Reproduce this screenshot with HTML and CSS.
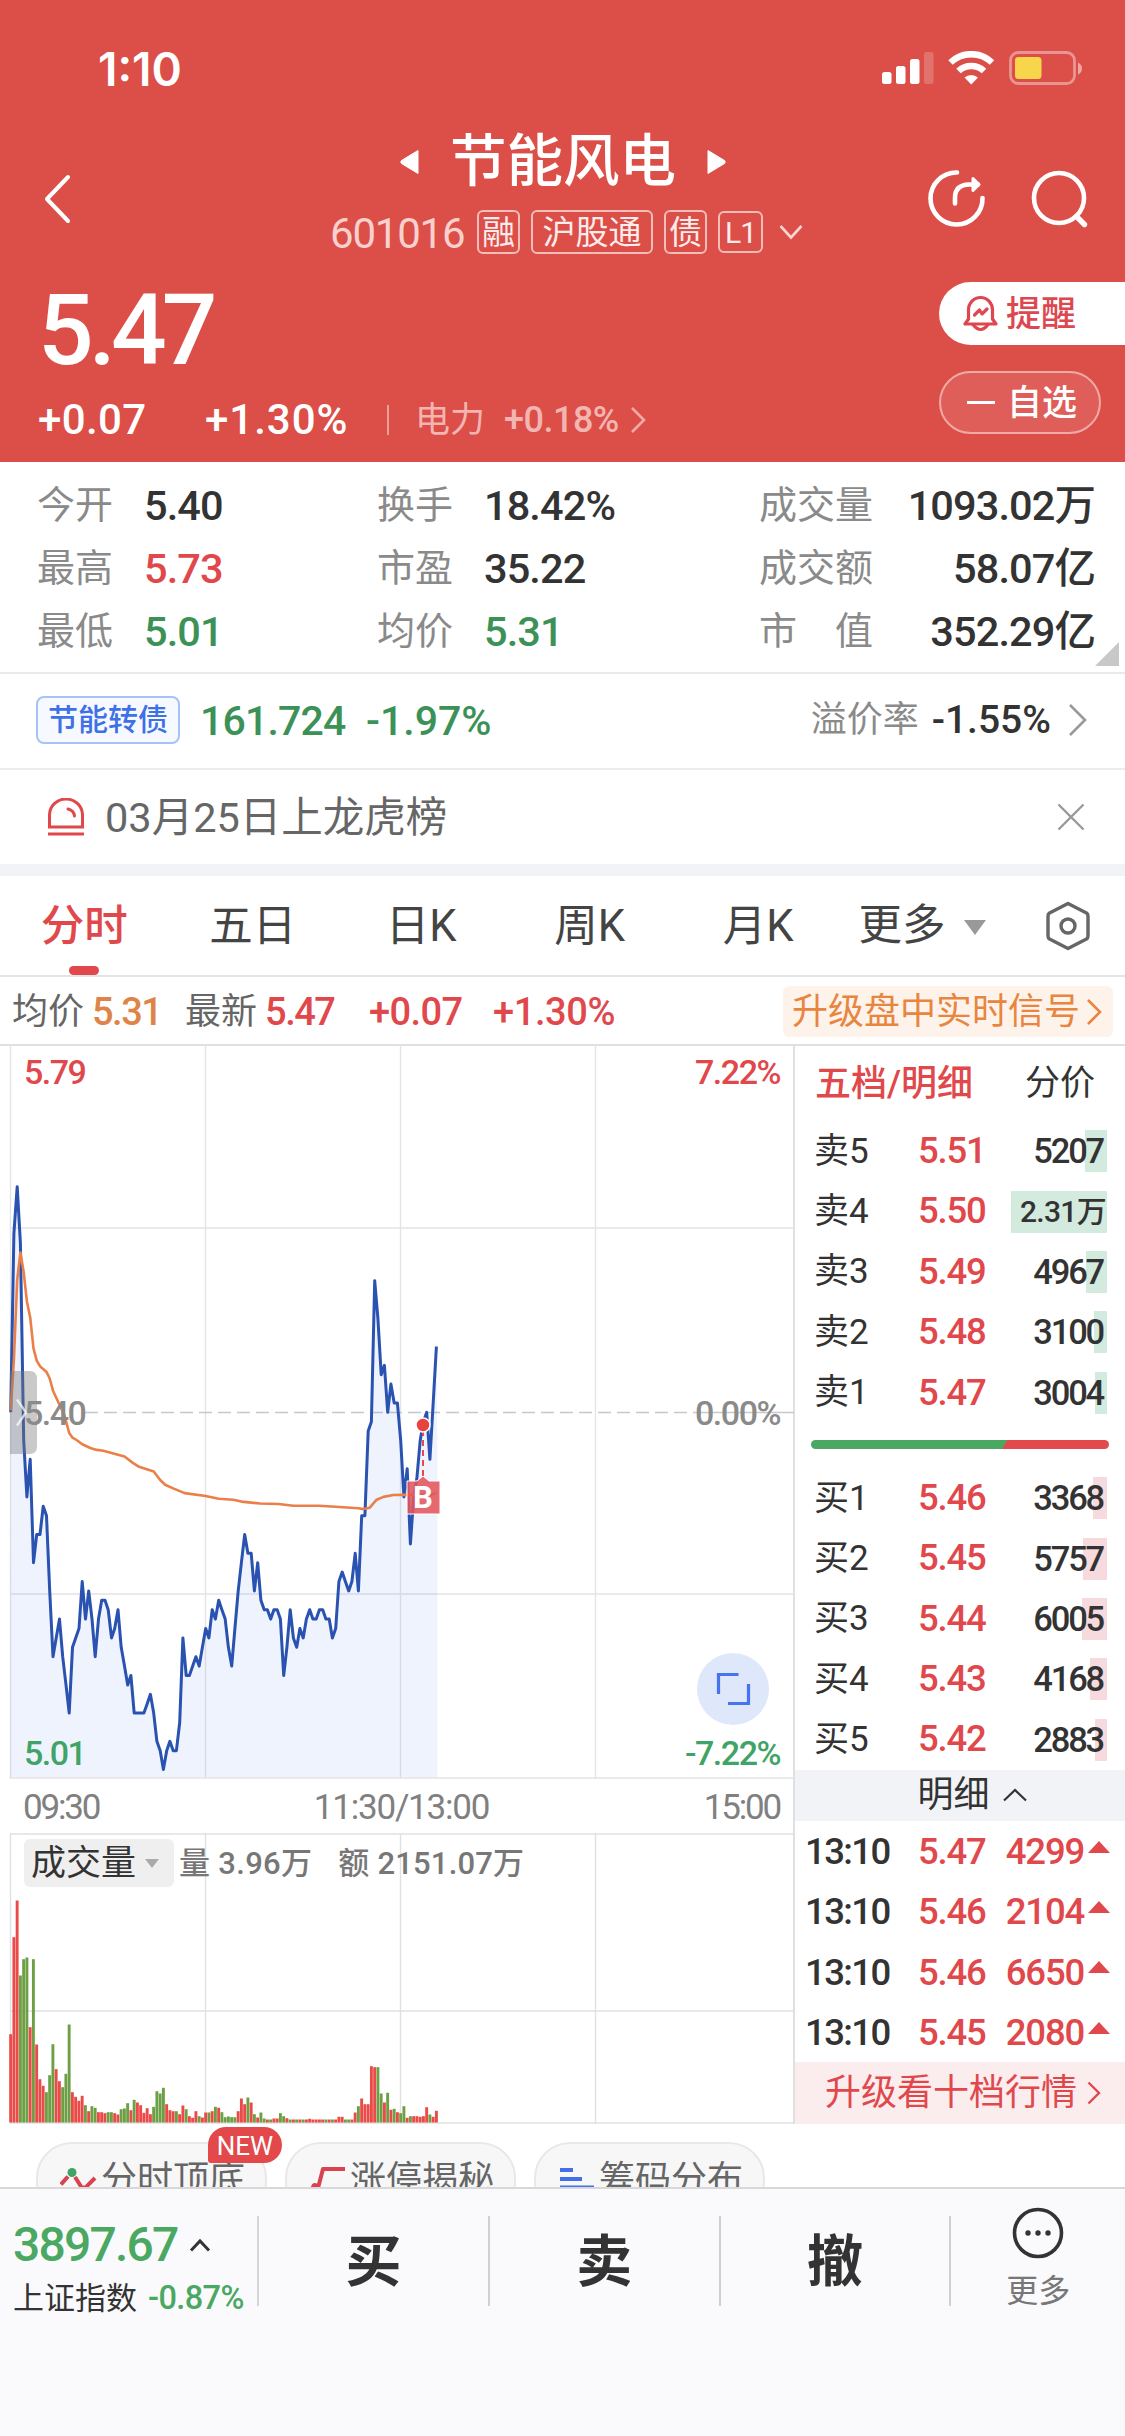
FILE: index.html
```html
<!DOCTYPE html>
<html lang="zh-CN">
<head>
    <meta charset="UTF-8">
    <meta name="viewport" content="width=device-width, initial-scale=1.0">
    <title>节能风电 601016</title>
    <link rel="stylesheet" href="styles.css">
</head>
<body>

<header class="header">
    <div class="status">
        <span class="clock">1:10</span>
        <svg class="status-icons" width="204" height="36" viewBox="0 0 204 36">
            <g fill="#fff">
                <rect x="0" y="21" width="9.500" height="12" rx="2.500"/>
                <rect x="14" y="15" width="9.500" height="18" rx="2.500"/>
                <rect x="28" y="8" width="9.500" height="25" rx="2.500"/>
                <rect x="42" y="1" width="9.500" height="32" rx="2.500" opacity=".2"/>
            </g>
            <g fill="none" stroke="#fff" stroke-width="6.500">
                <path d="M68.500 11.500a30 30 0 0 1 41.500 0"/>
                <path d="M76.500 20a18.500 18.500 0 0 1 25.500 0"/>
            </g>
            <path d="M82.500 26.500a10 10 0 0 1 13.500 0l-6.700 7z" fill="#fff"/>
            <rect x="128.500" y="1.500" width="64" height="31" rx="8" fill="none" stroke="#fff" stroke-width="2.800" opacity=".4"/>
            <rect x="133" y="6" width="26.500" height="22" rx="3.500" fill="#f7d64b"/>
            <path d="M196 11.500v12q4-2 4-6t-4-6z" fill="#fff" opacity=".5"/>
        </svg>
    </div>

    <div class="nav">
        <svg class="back" width="30" height="50" viewBox="0 0 30 50"><path d="M26 3L5 25l21 22" fill="none" stroke="#fff" stroke-width="4" stroke-linecap="round" stroke-linejoin="round"/></svg>
        <div class="title">
            <div class="name">
                <svg width="20" height="26" viewBox="0 0 20 26"><path d="M18 1.500v23L1.500 14.500q-1.500-1.500 0-3z" fill="#fff" stroke="#fff" stroke-linejoin="round"/></svg>
                <h1>节能风电</h1>
                <svg width="20" height="26" viewBox="0 0 20 26"><path d="M2 1.500v23l16.500-10q1.500-1.500 0-3z" fill="#fff" stroke="#fff" stroke-linejoin="round"/></svg>
            </div>
            <div class="code">
                <span class="code-num">601016</span>
                <span class="tag">融</span>
                <span class="tag tag-wide">沪股通</span>
                <span class="tag">债</span>
                <span class="tag tag-level">L1</span>
                <svg width="24" height="16" viewBox="0 0 24 16"><path d="M1.500 2L12 13.500 22.500 2" fill="none" stroke="#fbd5d2" stroke-width="2.600"/></svg>
            </div>
        </div>
        <div class="nav-icons">
            <svg width="60" height="60" viewBox="0 0 60 60" fill="none" stroke="#fff" stroke-width="4.600" stroke-linecap="round" stroke-linejoin="round">
                <path d="M30 3.500A26 26 0 1 0 55.500 29"/>
                <path d="M28 34.500v-6q0-12.500 14-13h9"/>
                <path d="M46 9.500l6 6-6 6z" fill="#fff" stroke-width="3"/>
            </svg>
            <svg width="60" height="60" viewBox="0 0 60 60" fill="none" stroke="#fff" stroke-width="4.600" stroke-linecap="round">
                <circle cx="29" cy="29" r="25"/>
                <path d="M46.500 47.500l8 8" stroke-width="5.400"/>
            </svg>
        </div>
    </div>

    <div class="quote">
        <div class="quote-left">
            <div class="price">5.47</div>
            <div class="change">
                <span class="change-abs">+0.07</span>
                <span class="change-pct">+1.30%</span>
                <i class="change-line"></i>
                <span class="sector">电力</span>
                <span class="sector-pct">+0.18%</span>
                <svg width="16" height="28" viewBox="0 0 16 28"><path d="M2 2l12 12L2 26" fill="none" stroke="#f0aba7" stroke-width="2.600"/></svg>
            </div>
        </div>
        <div class="quote-actions">
            <div class="pill remind">
                <svg width="36" height="38" viewBox="0 0 36 38" fill="none" stroke="#dd4850" stroke-width="3.200" stroke-linecap="round" stroke-linejoin="round">
                    <path d="M2 29h31l-3.500-5V15A12 12.500 0 0 0 5.500 15v9z"/>
                    <path d="M10 29.500q7.500 10 15 0"/>
                    <path d="M11.500 20l5-5 2.500 4 5-5"/>
                </svg>
                <span>提醒</span>
            </div>
            <div class="pill favor"><i></i><span>自选</span></div>
        </div>
    </div>
</header>

<section class="stats">
    <div class="stat-col">
        <p><label>今开</label><b>5.40</b></p>
        <p><label>最高</label><b class="red">5.73</b></p>
        <p><label>最低</label><b class="green">5.01</b></p>
    </div>
    <div class="stat-col">
        <p><label>换手</label><b>18.42%</b></p>
        <p><label>市盈</label><b>35.22</b></p>
        <p><label>均价</label><b class="green">5.31</b></p>
    </div>
    <div class="stat-col stat-right">
        <p><label>成交量</label><b>1093.02万</b></p>
        <p><label>成交额</label><b>58.07亿</b></p>
        <p><label>市　值</label><b>352.29亿</b></p>
    </div>
    <i class="corner"></i>
</section>

<section class="bond">
    <span class="bond-tag">节能转债</span>
    <b class="bond-price">161.724</b>
    <b class="bond-pct">-1.97%</b>
    <span class="premium">溢价率</span>
    <b class="premium-num">-1.55%</b>
    <svg width="20" height="34" viewBox="0 0 20 34"><path d="M2 2l15 15L2 32" fill="none" stroke="#999" stroke-width="2.600"/></svg>
</section>

<section class="notice">
    <svg width="38" height="38" viewBox="0 0 38 38" fill="none" stroke="#e0484c" stroke-width="3">
        <path d="M2.500 29V17a16 15.500 0 0 1 33 0v12z"/>
        <path d="M1 36h36"/>
        <path d="M21 11q6 1.500 6.500 7" stroke-linecap="round"/>
    </svg>
    <span>03月25日上龙虎榜</span>
    <svg class="close" width="28" height="28" viewBox="0 0 28 28"><path d="M1.500 1.500l25 25M26.500 1.500l-25 25" stroke="#999" stroke-width="2.400"/></svg>
</section>

<nav class="tabs">
    <span class="tab active">分时</span>
    <span class="tab">五日</span>
    <span class="tab">日K</span>
    <span class="tab">周K</span>
    <span class="tab">月K</span>
    <span class="tab tab-more">更多<i></i></span>
    <svg width="46" height="50" viewBox="0 0 46 50" fill="none" stroke="#666" stroke-width="3.400" stroke-linejoin="round">
        <path d="M23 2.500l18.500 9.500q1.500 1 1.500 3v20q0 2-1.500 3L23 47.500 4.500 38Q3 37 3 35V15q0-2 1.500-3z"/>
        <circle cx="23" cy="25" r="7"/>
    </svg>
</nav>

<div class="summary">
    <span>均价</span><b class="orange">5.31</b>
    <span>最新</span><b class="red">5.47</b>
    <b class="red sum-abs">+0.07</b>
    <b class="red sum-pct">+1.30%</b>
    <div class="signal">升级盘中实时信号<svg width="18" height="30" viewBox="0 0 18 30"><path d="M3 3l12 12L3 27" fill="none" stroke="#e8853f" stroke-width="2.600"/></svg></div>
</div>

<main class="board">
    <div class="charts">
        <svg class="price-chart" width="795" height="734" viewBox="0 0 795 734">
            <g stroke="#e3e4e6" stroke-width="1.400" fill="none">
                <path d="M10 183H794M10 549H794M10 733H794"/>
                <path d="M10.500 0V734M205.500 0V734M400.500 0V734M595.500 0V734"/>
            </g>
            <path d="M85 367.500H695M788 367.500H794" stroke="#c4c7cd" stroke-width="1.600" stroke-dasharray="13 6"/>
            <path d="M695 367.500H788" stroke="#c9c9c9" stroke-width="1.600"/>
            <g id="price-lines"></g>
            <path d="M10 326h20q7 0 7 8v67q0 8-7 8H10z" fill="#777" opacity=".4"/>
            <path d="M17 354.500l9 13-9 13" fill="none" stroke="#fff" stroke-width="2.400" opacity=".7"/>
            <g class="chart-text">
                <text x="24" y="39" fill="#e0484c">5.79</text>
                <text x="780" y="39" fill="#e0484c" text-anchor="end">7.22%</text>
                <text x="24" y="380" fill="#8a8a8a">5.40</text>
                <text x="780" y="380" fill="#8a8a8a" text-anchor="end">0.00%</text>
                <text x="24" y="720" fill="#3fa465">5.01</text>
                <text x="780" y="720" fill="#3fa465" text-anchor="end">-7.22%</text>
            </g>
            <!-- buy marker -->
            <path d="M423 385v50" stroke="#e5484d" stroke-width="2" stroke-dasharray="6 4"/>
            <circle cx="423" cy="380" r="7" fill="#e8433f" stroke="#fff" stroke-width="1.500"/>
            <path d="M407 436h10l6-5 6 5h11v33h-33z" fill="#e2555c" fill-opacity=".88" stroke="#fff" stroke-width="1"/>
            <text class="buy-mark" x="423" y="463" text-anchor="middle">B</text>
            <circle cx="733" cy="644" r="36" fill="#dfe7fb"/>
            <path d="M718.500 649v-19.500h20M728 658.500h20.500V639" fill="none" stroke="#4674ef" stroke-width="3.200"/>
        </svg>
        <div class="axis"><span>09:30</span><span class="noon">11:30/13:00</span><span>15:00</span></div>
        <div class="volume">
            <svg width="795" height="291" viewBox="0 0 795 291">
                <g stroke="#e0e1e4" stroke-width="1.400" fill="none">
                    <path d="M10 1H794M10 178H794M10 290H794"/>
                    <path d="M10.500 0V291M205.500 0V291M400.500 0V291M595.500 0V291"/>
                </g>
                <g id="volume-bars"></g>
            </svg>
            <div class="volume-head">
                <span class="indicator">成交量<i></i></span>
                <span class="vol-num">量 3.96万</span>
                <span class="amt-num">额 2151.07万</span>
            </div>
        </div>
    </div>

    <aside class="depth">
        <div class="depth-tabs"><b>五档/明细</b><span>分价</span></div>
        <div class="level"><span>卖5</span><b>5.51</b><em class="sell"><i style="width: 22px"></i>5207</em></div>
        <div class="level"><span>卖4</span><b>5.50</b><em class="sell wan"><i style="width: 96px"></i>2.31万</em></div>
        <div class="level"><span>卖3</span><b>5.49</b><em class="sell"><i style="width: 21px"></i>4967</em></div>
        <div class="level"><span>卖2</span><b>5.48</b><em class="sell"><i style="width: 13px"></i>3100</em></div>
        <div class="level"><span>卖1</span><b>5.47</b><em class="sell"><i style="width: 12px"></i>3004</em></div>
        <div class="ratio"><i></i></div>
        <div class="level"><span>买1</span><b>5.46</b><em class="buy"><i style="width: 14px"></i>3368</em></div>
        <div class="level"><span>买2</span><b>5.45</b><em class="buy"><i style="width: 24px"></i>5757</em></div>
        <div class="level"><span>买3</span><b>5.44</b><em class="buy"><i style="width: 25px"></i>6005</em></div>
        <div class="level"><span>买4</span><b>5.43</b><em class="buy"><i style="width: 17px"></i>4168</em></div>
        <div class="level"><span>买5</span><b>5.42</b><em class="buy"><i style="width: 12px"></i>2883</em></div>
        <div class="detail-head">明细<svg width="24" height="14" viewBox="0 0 24 14"><path d="M1 12.500L12 2l11 10.500" fill="none" stroke="#333" stroke-width="2.200"/></svg></div>
        <div class="tick"><span>13:10</span><b>5.47</b><em>4299</em><i></i></div>
        <div class="tick"><span>13:10</span><b>5.46</b><em>2104</em><i></i></div>
        <div class="tick"><span>13:10</span><b>5.46</b><em>6650</em><i></i></div>
        <div class="tick"><span>13:10</span><b>5.45</b><em>2080</em><i></i></div>
        <div class="upgrade">升级看十档行情<svg width="16" height="26" viewBox="0 0 16 26"><path d="M2.500 2.500L13 13 2.500 23.500" fill="none" stroke="#e0484c" stroke-width="2.400"/></svg></div>
    </aside>
</main>

<div class="tools">
    <div class="chip">
        <svg width="38" height="36" viewBox="0 0 38 36" fill="none" stroke="#d8434f" stroke-width="4">
            <path d="M1 18.500l7-8M15 11l7 11M22 21q3 2 5-1l8-8"/>
            <circle cx="12" cy="6.500" r="4.500" fill="#3fa465" stroke="none"/>
        </svg>
        分时顶底
        <span class="badge">NEW</span>
    </div>
    <div class="chip">
        <svg width="38" height="36" viewBox="0 0 38 36" fill="none" stroke="#d8434f" stroke-width="4" stroke-linejoin="round"><path d="M3 24q2-9 6-2l5-19h22"/></svg>
        涨停揭秘
    </div>
    <div class="chip">
        <svg width="38" height="36" viewBox="0 0 38 36"><path d="M2 4h13M2 13h22M2 21.500h34" stroke="#4370e8" stroke-width="4"/></svg>
        筹码分布
    </div>
</div>

<footer class="bottom">
    <div class="index">
        <div class="index-num">3897.67<svg width="22" height="14" viewBox="0 0 22 14"><path d="M2 12.500l9-9.500 9 9.500" fill="none" stroke="#333" stroke-width="3"/></svg></div>
        <div class="index-name">上证指数<span>-0.87%</span></div>
    </div>
    <div class="trade">买</div>
    <div class="trade">卖</div>
    <div class="trade">撤</div>
    <div class="more">
        <svg width="52" height="52" viewBox="0 0 52 52"><circle cx="26" cy="26" r="23.500" fill="none" stroke="#333" stroke-width="3.600"/><g fill="#333"><circle cx="16" cy="26" r="2.700"/><circle cx="26" cy="26" r="2.700"/><circle cx="36" cy="26" r="2.700"/></g></svg>
        <span>更多</span>
    </div>
</footer>

<script>
    // price per minute since 09:30, in fen
    const prices = [
        540, 559, 564, 558, 537, 531, 535, 524, 527, 527, 530, 529, 521, 514, 516, 518, 514, 511, 508, 515,
        516, 517, 522, 518, 521, 518, 514, 518, 520, 520, 519, 516, 517, 519, 515, 513, 511, 512, 508, 508,
        508, 508, 509, 510, 508, 505, 504, 502, 504, 505, 504, 504, 507, 516, 512, 512, 513, 514, 513, 515,
        517, 516, 519, 518, 520, 519, 518, 515, 513, 517, 521, 524, 527, 525, 525, 521, 524, 520, 519, 519,
        518, 519, 519, 518, 512, 515, 519, 516, 515, 517, 516, 518, 519, 518, 518, 519, 519, 518, 518, 516,
        517, 522, 523, 522, 521, 522, 525, 521, 529, 529, 538, 539, 554, 550, 544, 545, 540, 543, 541, 541,
        537, 531, 534, 526, 531, 533, 537, 539, 540, 535, 541, 547
    ];

    // average price: [minute, price]
    const average = [
        [0, 540.2], [1, 545.6], [2, 554.1], [3, 557], [4, 554.9], [5, 551.8], [6, 550.1], [7, 546.8], [8, 545.5],
        [9, 544.9], [10, 544.6], [11, 544.3], [12, 543.6], [13, 542.3], [15, 540.8], [16.5, 539.7], [18, 537.8],
        [19, 537.3], [20.5, 537], [22, 536.6], [24.5, 536.2], [26.5, 536], [28.5, 535.9], [35, 535.3], [37.7, 534.6],
        [39.5, 534.2], [44, 533.7], [46, 532.8], [47.5, 532.3], [50, 531.9], [53.5, 531.4], [60, 531.1], [64, 530.8],
        [68.5, 530.7], [71, 530.5], [76.7, 530.3], [82.4, 530.25], [87, 530.05], [95, 530.05], [102.4, 529.9],
        [107, 529.8], [108.5, 529.7], [110.5, 529.85], [112.6, 530.7], [114.7, 531], [117.7, 531.2], [124, 531.25],
        [129, 531.2], [131, 531.45]
    ];

    // volume per minute, negative when the price went down
    const volumes = [
        265, 556, 666, -441, -490, -495, 286, -490, 234, 130, 110, -91, -142, -235, 160, 124, -106, -146, -294, 91,
        77, 65, 80, -52, 34, -49, -44, 31, 31, 28, -31, -31, 28, 24, -40, -42, -58, 37, -68, 60,
        52, 29, 43, 25, -47, -94, -87, -104, 55, 37, 34, -34, 25, 51, -40, 19, 14, 34, -19, 15,
        30, -30, 34, -47, 44, -31, -16, -18, -16, -16, 34, 72, 55, -75, 60, -25, 15, -30, -12, 9,
        -9, 12, 12, -28, -19, 13, -9, 9, -9, 9, -9, 9, 11, 9, 9, 9, 9, -9, 9, -9,
        9, 17, 17, -9, -9, 9, 30, -49, 72, 55, 55, 169, 166, -166, -87, 60, -89, 38, -41, 31,
        -28, -49, 14, -19, 19, 19, 17, 19, 46, -24, 17, 35
    ];

    const toX = minute => 10.7 + minute * 3.25;
    const toY = price => 367.3 - (price - 540) * 9.4;
    const toPoints = list => list.map(([m, p]) => toX(m).toFixed(1) + ',' + toY(p).toFixed(1)).join(' ');

    const line = toPoints(prices.map((p, i) => [i, p]));
    document.getElementById('price-lines').innerHTML =
        `<polygon points="10,732 ${line} 437.5,410 437.5,732" fill="#4b7be8" fill-opacity=".09"/>` +
        `<polyline points="${line}" fill="none" stroke="#2a52b0" stroke-width="3" stroke-linejoin="round"/>` +
        `<polyline points="${toPoints(average)}" fill="none" stroke="#ea7f47" stroke-width="2.6" stroke-linejoin="round"/>`;

    document.getElementById('volume-bars').innerHTML = volumes.map((v, i) => {
        const h = Math.abs(v) / 3;
        return `<rect x="${(9.2 + i * 3.25).toFixed(2)}" y="${(289.5 - h).toFixed(1)}" width="2.9" height="${h.toFixed(1)}" fill="${v > 0 ? '#ea4b48' : '#6da045'}"/>`;
    }).join('');
</script>

</body>
</html>
```
FILE: styles.css
```css
* {
    box-sizing: border-box;
    margin: 0;
    padding: 0;
}
body {
    width: 1125px;
    height: 2436px;
    overflow: hidden;
    background: #fff;
    color: #333;
    font-family: Roboto, "Noto Sans CJK SC", sans-serif;
    font-size: 36px;
    line-height: 1;
}
b {
    font-weight: 500;
}
i, em {
    font-style: normal;
}
svg {
    display: block;
    flex: none;
}
.red {
    color: #e0484c;
}
.green {
    color: #3c9157;
}
.orange {
    color: #de8449;
}

/* header */
.header {
    height: 462px;
    background: #db4f48;
    color: #fff;
}
.status {
    height: 126px;
    padding: 12px 39px 0 98px;
    display: flex;
    align-items: center;
    justify-content: space-between;
}
.clock {
    font-family: Inter, sans-serif;
    font-size: 46px;
    font-weight: 600;
    letter-spacing: 0;
}
.nav {
    height: 145px;
    padding: 0 36px 0 42px;
    display: grid;
    grid-template-columns: 160px 1fr 162px;
    align-items: center;
}
.title {
    align-self: start;
    padding-top: 1px;
}
.name, .code {
    height: 70px;
    display: flex;
    align-items: center;
}
.name {
    padding-left: 198px;
    gap: 30px;
}
.name h1 {
    padding-top: 1px;
    font-size: 56.5px;
    font-weight: 500;
}
.code {
    padding-left: 128px;
}
.code-num {
    width: 147px;
    padding-top: 3px;
    font-size: 42px;
    letter-spacing: -1.2px;
    color: #f9d0cd;
}
.tag {
    height: 44px;
    width: 43px;
    margin-right: 11px;
    padding-top: 1px;
    border: 2px solid #f3bdb9;
    border-radius: 6px;
    display: flex;
    align-items: center;
    justify-content: center;
    font-size: 33px;
    color: #fdeceb;
}
.tag-wide {
    width: 122px;
}
.tag-level {
    width: 45px;
    height: 42px;
    font-size: 30px;
    margin-right: 16px;
    letter-spacing: -1px;
}
.nav-icons {
    display: flex;
    gap: 43px;
}
.quote {
    display: flex;
    justify-content: space-between;
}
.quote-left {
    padding: 13px 0 0 38px;
}
.price {
    height: 94px;
    line-height: 94px;
    font-size: 98px;
    font-weight: 500;
    letter-spacing: -5px;
}
.change {
    height: 52px;
    margin-top: 16px;
    display: flex;
    align-items: center;
    font-size: 42px;
    font-weight: 500;
}
.change-abs {
    width: 167px;
    letter-spacing: .4px;
}
.change-pct {
    width: 182px;
    letter-spacing: 1px;
}
.change-line {
    width: 2px;
    height: 30px;
    margin-right: 26px;
    background: #eb9f9b;
}
.sector {
    width: 89px;
    font-size: 35px;
    font-weight: 400;
    color: #f2b5b2;
}
.sector-pct {
    width: 126px;
    font-size: 36px;
    letter-spacing: -.5px;
    color: #f2b5b2;
}
.quote-actions {
    width: 186px;
    padding-top: 11px;
}
.pill {
    height: 63px;
    display: flex;
    align-items: center;
    font-size: 35px;
    font-weight: 500;
}
.pill span {
    padding-top: 2px;
}
.remind {
    padding-left: 24px;
    gap: 7px;
    border-radius: 32px 0 0 32px;
    background: #fff;
    color: #dd4850;
}
.favor {
    width: 162px;
    margin-top: 26px;
    padding-left: 26px;
    gap: 12px;
    border: 2px solid #f0aaa6;
    border-radius: 32px;
    background: #df5e59;
}
.favor i {
    width: 28px;
    height: 3px;
    background: #fff;
}

/* daily figures */
.stats {
    position: relative;
    height: 212px;
    padding: 11px 30px 0 37px;
    border-bottom: 2px solid #e9eaec;
    display: grid;
    grid-template-columns: 340px 382px 1fr;
}
.stat-col p {
    height: 63px;
    display: flex;
    align-items: center;
}
.stat-col label {
    width: 107px;
    font-size: 38px;
    color: #8a8a8a;
}
.stat-col b {
    padding-top: 2px;
    font-size: 41.5px;
    letter-spacing: -.9px;
}
.stat-right p {
    justify-content: space-between;
}
.stat-right label {
    width: 116px;
}
.corner {
    position: absolute;
    right: 6px;
    bottom: 6px;
    width: 24px;
    height: 24px;
    background: #c8c8c8;
    clip-path: polygon(100% 0, 100% 100%, 0 100%);
}
.bond {
    height: 96px;
    padding: 0 37px 2px 36px;
    border-bottom: 2px solid #ececee;
    display: flex;
    align-items: center;
}
.bond-tag {
    width: 144px;
    height: 48px;
    border: 2px solid #a9c2f6;
    border-radius: 8px;
    background: #f6f9ff;
    color: #3e70e6;
    font-size: 30px;
    font-weight: 500;
    line-height: 44px;
    text-align: center;
}
.bond-price, .bond-pct {
    padding-top: 3px;
    font-size: 41px;
    color: #3c9157;
}
.bond-price {
    margin-left: 20px;
    width: 166px;
    letter-spacing: -.8px;
}
.premium {
    margin-left: auto;
    font-size: 36px;
    color: #8a8a8a;
}
.premium-num {
    margin: 0 17px 0 13px;
    font-size: 39px;
}
.notice {
    height: 106px;
    padding: 0 40px 0 47px;
    border-bottom: 12px solid #f2f3f6;
    display: flex;
    align-items: center;
    gap: 20px;
    font-size: 41.5px;
    color: #666;
}
.notice span {
    padding-top: 2px;
}
.close {
    margin-left: auto;
}

/* period tabs */
.tabs {
    height: 101px;
    padding: 0 34px 0 0;
    border-bottom: 2px solid #e3e4e6;
    display: flex;
    align-items: center;
    font-size: 43.5px;
    color: #444;
}
.tab {
    position: relative;
    width: 168.5px;
    height: 99px;
    line-height: 102px;
    text-align: center;
}
.tab.active {
    color: #e0484c;
    font-weight: 500;
}
.tab.active::after {
    content: "";
    position: absolute;
    left: 69px;
    bottom: 0;
    width: 30px;
    height: 9px;
    border-radius: 4.5px;
    background: #e0484c;
}
.tab-more {
    width: 145px;
    margin-left: 16px;
    margin-right: auto;
    display: flex;
    align-items: center;
    gap: 18px;
}
.tab-more i {
    margin-top: 3px;
    border: 11px solid transparent;
    border-top: 15px solid #999;
    border-bottom: 0;
}
.summary {
    height: 67px;
    padding: 2px 12px 0 12px;
    display: flex;
    align-items: center;
    font-size: 36px;
    color: #666;
}
.summary b {
    width: 71px;
    margin: 0 22px 0 8px;
    font-size: 38px;
    letter-spacing: -1.5px;
}
.summary .sum-abs {
    width: 92px;
    margin: 0 32px 0 11px;
    letter-spacing: -.6px;
}
.summary .sum-pct {
    width: 130px;
    margin: 0;
    letter-spacing: -.4px;
}
.signal {
    height: 51px;
    margin-left: auto;
    padding: 0 10px 0 9px;
    border-radius: 6px;
    background: #fef3eb;
    display: flex;
    align-items: center;
    gap: 5px;
    color: #e8853f;
}

/* charts */
.board {
    height: 1080px;
    display: flex;
    border-top: 2px solid #dfe0e2;
}
.charts {
    width: 795px;
    border-right: 2px solid #dfe0e2;
    margin-top: -1px;
}
.chart-text {
    font-size: 34px;
    font-weight: 500;
    letter-spacing: -1.5px;
}
.buy-mark {
    fill: #fff;
    font-size: 31px;
    font-weight: 700;
}
.axis {
    height: 54px;
    padding: 2px 13px 0 23px;
    display: flex;
    align-items: center;
    justify-content: space-between;
    color: #808080;
    font-size: 35px;
    letter-spacing: -2.2px;
}
.axis .noon {
    letter-spacing: -1.2px;
}
.volume {
    position: relative;
}
.volume-head {
    position: absolute;
    top: 6px;
    left: 24px;
    height: 48px;
    display: flex;
    align-items: center;
    font-size: 31px;
    font-weight: 500;
    color: #777;
}
.indicator {
    width: 150px;
    height: 48px;
    padding-left: 7px;
    margin-right: 5px;
    border-radius: 6px;
    background: #efefef;
    display: flex;
    align-items: center;
    gap: 9px;
    font-size: 35px;
    font-weight: 400;
    color: #333;
}
.indicator i {
    border: 7px solid transparent;
    border-top: 9px solid #aaa;
    border-bottom: 0;
}
.vol-num {
    letter-spacing: .3px;
}
.amt-num {
    margin-left: 26px;
    letter-spacing: .2px;
}

/* order book */
.depth {
    flex: 1;
}
.depth-tabs {
    height: 75px;
    padding: 0 30px 0 20px;
    display: flex;
    align-items: center;
    justify-content: space-between;
    font-size: 35px;
}
.depth-tabs b {
    font-size: 36px;
    color: #e0484c;
}
.level {
    height: 60.4px;
    padding: 0 18px 0 19px;
    display: flex;
    align-items: center;
}
.level span {
    width: 104px;
    font-size: 35px;
}
.level b {
    flex: 1;
    color: #e0484c;
    font-size: 36.5px;
    letter-spacing: -1.2px;
}
.level em {
    position: relative;
    z-index: 0;
    height: 42px;
    line-height: 42px;
    font-size: 34.5px;
    font-weight: 500;
    letter-spacing: -2.2px;
    padding-right: 4px;
}
.level em.wan {
    padding-right: 1px;
    font-size: 30px;
    letter-spacing: -.7px;
}
.level em i {
    position: absolute;
    z-index: -1;
    top: 0;
    right: 0;
    height: 42px;
}
.sell i {
    background: #d3eadf;
}
.buy i {
    background: #f6dadd;
}
.ratio {
    height: 45px;
    padding: 17px 16px 0 16px;
}
.ratio i {
    display: block;
    height: 9px;
    border-radius: 4.5px;
    background: linear-gradient(120deg, #4aa862 64.5%, #e24a4c 65%);
}
.detail-head {
    height: 51px;
    background: #f2f3f7;
    display: flex;
    align-items: center;
    justify-content: center;
    gap: 13px;
    padding-left: 24px;
}
.tick {
    height: 60.4px;
    padding: 2px 15px 0 10px;
    display: flex;
    align-items: center;
    font-size: 36.5px;
    font-weight: 500;
}
.tick span {
    width: 113px;
    letter-spacing: -1.6px;
}
.tick b, .tick em {
    color: #e0484c;
    letter-spacing: -1.2px;
}
.tick em {
    margin-left: auto;
}
.tick i {
    margin: -11px 0 0 4px;
    border: 11px solid transparent;
    border-bottom: 12px solid #e0484c;
    border-top: 0;
}
.upgrade {
    height: 62px;
    padding-left: 30px;
    background: #fbecee;
    color: #e0484c;
    display: flex;
    align-items: center;
    gap: 9px;
}

/* tools strip, cut off by the bottom bar */
.tools {
    height: 63px;
    padding: 18px 36px 0;
    overflow: hidden;
    display: flex;
    gap: 18px;
}
.chip {
    position: relative;
    flex: none;
    width: 231px;
    height: 76px;
    padding-left: 22px;
    border: 2px solid #e8e8e9;
    border-radius: 36px;
    background: #f7f7f8;
    display: flex;
    align-items: center;
    gap: 3px;
    color: #666;
}
.chip svg {
    margin-top: 8px;
}
.badge {
    position: absolute;
    top: -17px;
    left: 170px;
    width: 74px;
    height: 36px;
    border-radius: 18px 18px 18px 3px;
    background: #e3484b;
    color: #fff;
    font-size: 26px;
    line-height: 38px;
    text-align: center;
}

/* bottom bar */
.bottom {
    height: 249px;
    padding-top: 27px;
    border-top: 2px solid #d8d8da;
    background: #fafafd;
    display: flex;
}
.index {
    width: 259px;
    height: 90px;
    padding-left: 13px;
    border-right: 2px solid #d6d6d8;
}
.index-num {
    height: 57px;
    display: flex;
    align-items: center;
    gap: 12px;
    color: #4aa862;
    font-size: 48px;
    font-weight: 500;
    letter-spacing: -1.8px;
}
.index-name {
    height: 51px;
    line-height: 51px;
    font-size: 31px;
    white-space: nowrap;
}
.index-name span {
    margin-left: 11px;
    color: #4aa862;
    font-size: 32.5px;
    font-weight: 500;
    letter-spacing: -.6px;
}
.trade {
    width: 230.8px;
    height: 90px;
    line-height: 92px;
    border-right: 2px solid #d0d0d2;
    text-align: center;
    font-size: 56px;
    font-weight: 700;
}
.more {
    flex: 1;
    margin-top: -9px;
    display: flex;
    flex-direction: column;
    align-items: center;
    gap: 16px;
    font-size: 32px;
    color: #777;
}
```
